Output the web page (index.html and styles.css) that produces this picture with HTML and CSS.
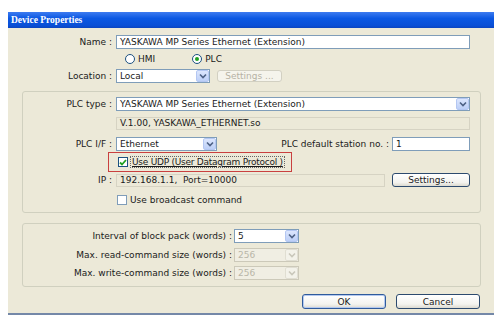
FILE: index.html
```html
<!DOCTYPE html>
<html lang="en">
<head>
    <meta charset="UTF-8">
    <title>Device Properties</title>
    <link rel="stylesheet" href="styles.css">
</head>
<body>
    <div class="dialog">
        <div class="titlebar">Device Properties</div>
        <div class="content">
            <div class="row">
                <span class="label top-label">Name :</span>
                <div class="field w-full">YASKAWA MP Series Ethernet (Extension)</div>
            </div>
            <div class="row radios">
                <span class="radio"></span><span class="radio-text">HMI</span>
                <span class="radio checked"></span><span class="radio-text">PLC</span>
            </div>
            <div class="row">
                <span class="label top-label">Location :</span>
                <div class="select w-loc">
                    <span class="value">Local</span>
                    <span class="arrow"><svg width="8" height="6" viewBox="0 0 8 6"><polyline points="1,1.5 4,4.5 7,1.5" fill="none" stroke="#4d6185" stroke-width="1.6"/></svg></span>
                </div>
                <button class="btn disabled btn-loc">Settings ...</button>
            </div>

            <div class="group group-plc">
                <div class="row first">
                    <span class="label grp-label">PLC type :</span>
                    <div class="select w-full">
                        <span class="value">YASKAWA MP Series Ethernet (Extension)</span>
                        <span class="arrow"><svg width="8" height="6" viewBox="0 0 8 6"><polyline points="1,1.5 4,4.5 7,1.5" fill="none" stroke="#4d6185" stroke-width="1.6"/></svg></span>
                    </div>
                </div>
                <div class="row info-row">
                    <span class="label grp-label"></span>
                    <div class="field readonly w-full">V.1.00, YASKAWA_ETHERNET.so</div>
                </div>
                <div class="row if-row">
                    <span class="label grp-label">PLC I/F :</span>
                    <div class="select w-if">
                        <span class="value">Ethernet</span>
                        <span class="arrow"><svg width="8" height="6" viewBox="0 0 8 6"><polyline points="1,1.5 4,4.5 7,1.5" fill="none" stroke="#4d6185" stroke-width="1.6"/></svg></span>
                    </div>
                    <span class="station-label">PLC default station no. :</span>
                    <div class="field w-small">1</div>
                </div>
                <div class="udp-box">
                    <span class="check checked"><svg width="8" height="7" viewBox="0 0 8 7"><polyline points="1,3.5 3,5.5 7,1" fill="none" stroke="#21a121" stroke-width="1.8"/></svg></span>
                    <span class="udp-text">Use UDP (User Datagram Protocol )</span>
                </div>
                <div class="row ip-row">
                    <span class="label grp-label">IP :</span>
                    <div class="field readonly w-ip">192.168.1.1,&nbsp; Port=10000</div>
                    <button class="btn btn-ip">Settings...</button>
                </div>
                <div class="row bc-row">
                    <span class="label grp-label"></span>
                    <span class="check"></span>
                    <span class="check-text">Use broadcast command</span>
                </div>
            </div>

            <div class="group group-block">
                <div class="row first">
                    <span class="label blk-label">Interval of block pack (words) :</span>
                    <div class="select w-num">
                        <span class="value">5</span>
                        <span class="arrow"><svg width="8" height="6" viewBox="0 0 8 6"><polyline points="1,1.5 4,4.5 7,1.5" fill="none" stroke="#4d6185" stroke-width="1.6"/></svg></span>
                    </div>
                </div>
                <div class="row read-row">
                    <span class="label blk-label">Max. read-command size (words) :</span>
                    <div class="select disabled w-num">
                        <span class="value">256</span>
                        <span class="arrow"><svg width="8" height="6" viewBox="0 0 8 6"><polyline points="1,1.5 4,4.5 7,1.5" fill="none" stroke="#c9c7ba" stroke-width="1.6"/></svg></span>
                    </div>
                </div>
                <div class="row write-row">
                    <span class="label blk-label">Max. write-command size (words) :</span>
                    <div class="select disabled w-num">
                        <span class="value">256</span>
                        <span class="arrow"><svg width="8" height="6" viewBox="0 0 8 6"><polyline points="1,1.5 4,4.5 7,1.5" fill="none" stroke="#c9c7ba" stroke-width="1.6"/></svg></span>
                    </div>
                </div>
            </div>

            <div class="buttons">
                <button class="btn btn-main default">OK</button>
                <button class="btn btn-main">Cancel</button>
            </div>
        </div>
    </div>
</body>
</html>
```

FILE: styles.css
```css
body {
    margin: 0;
    background: #fff;
    font-family: "DejaVu Sans", Verdana, sans-serif;
    font-size: 9px;
    color: #1a1a1a;
}

.dialog {
    width: 486px;
    margin: 12px 0 0 8px;
    background: #ece9d8;
    border-bottom: 2px solid #7488a8;
}

.titlebar {
    height: 16px;
    line-height: 16px;
    padding-left: 3px;
    background: linear-gradient(#3d7bf0, #0b58e3 40%, #0a4fd6 85%, #0c45c0);
    color: #fff;
    font-family: "Liberation Serif", serif;
    font-weight: bold;
    font-size: 9.5px;
}

.content {
    padding: 7px 0 4px 0;
}

.row {
    display: flex;
    align-items: center;
    height: 14px;
    margin-top: 3px;
}

.content > .row:first-child {
    margin-top: 0;
}

.label {
    text-align: right;
    padding-right: 4px;
    flex-shrink: 0;
    white-space: nowrap;
}

.top-label {
    width: 104px;
}

.grp-label {
    width: 89px;
}

.blk-label {
    width: 209px;
    padding-right: 2px;
}

.field,
.select {
    box-sizing: border-box;
    height: 14px;
    border: 1px solid #7f9db9;
    background: #fff;
    display: flex;
    align-items: center;
    padding-left: 3px;
    white-space: nowrap;
    overflow: hidden;
}

.field.readonly {
    background: #ece9d8;
    border-color: #d6d3c3;
    height: 13px;
}

.select {
    padding-right: 0;
}

.select .value {
    flex: 1;
}

.select .arrow {
    box-sizing: border-box;
    width: 13px;
    height: 12px;
    background: linear-gradient(#dce6fd, #bccff7);
    border: 1px solid #b4c7f2;
    border-radius: 2px;
    display: flex;
    align-items: center;
    justify-content: center;
}

.select.disabled {
    border-color: #ccc9b9;
    background: #f0eee3;
    color: #b9b6a8;
}

.select.disabled .arrow {
    background: #f3f2ea;
    border-color: #e0ded2;
}

.w-full { width: 354px; }
.w-loc { width: 94px; }
.w-if { width: 101px; }
.w-small { width: 78px; }
.w-ip { width: 269px; }
.w-num { width: 65px; }

.radios {
    margin-top: 3px;
}

.radio {
    box-sizing: border-box;
    width: 10px;
    height: 10px;
    border: 1px solid #1c5180;
    border-radius: 50%;
    background: #fff;
    position: relative;
    margin-left: 117px;
}

.radio.checked {
    margin-left: 37px;
}

.radio.checked::after {
    content: "";
    position: absolute;
    left: 2px;
    top: 2px;
    width: 4px;
    height: 4px;
    border-radius: 50%;
    background: #21a121;
}

.radio-text {
    margin-left: 3px;
}

.btn {
    box-sizing: border-box;
    font-family: "DejaVu Sans", Verdana, sans-serif;
    font-size: 9px;
    color: #1a1a1a;
    background: linear-gradient(#ffffff, #f3f3ef 70%, #dcdad0);
    border: 1px solid #2c4a6e;
    border-radius: 3px;
    padding: 0;
    height: 14px;
}

.btn.disabled {
    color: #b5b2a4;
    border-color: #d2d0c2;
    background: #f5f4ec;
}

.btn-loc {
    width: 65px;
    height: 12px;
    margin-left: 7px;
}

.group {
    margin: 8px 13px 0 14px;
    border: 1px solid #d0d0bf;
    border-radius: 3px;
}

.group .row.first {
    margin-top: 5px;
}

.group-plc {
    padding-bottom: 5px;
}

.info-row {
    margin-top: 5px;
}

.if-row {
    margin-top: 7px;
}

.station-label {
    margin-left: auto;
    padding-right: 3px;
}

.if-row .w-small {
    margin-right: 10px;
}

.udp-box {
    box-sizing: border-box;
    width: 184px;
    height: 20px;
    margin: 1px 0 0 85px;
    border: 1px solid #c9403f;
    display: flex;
    align-items: center;
    padding-left: 9px;
    white-space: nowrap;
}

.check {
    box-sizing: border-box;
    width: 10px;
    height: 10px;
    border: 1px solid #1c5180;
    background: #fff;
    display: flex;
    align-items: center;
    justify-content: center;
    flex-shrink: 0;
}

.udp-text {
    margin-left: 2px;
    padding: 0 1px;
    border: 1px dotted #666;
    text-decoration: underline;
    letter-spacing: -0.25px;
    white-space: nowrap;
}

.ip-row {
    margin-top: 1px;
}

.btn-ip {
    width: 78px;
    margin-left: 7px;
    height: 14px;
}

.bc-row {
    margin-top: 6px;
}

.bc-row .check {
    margin-left: 1px;
    border-color: #7f9db9;
}

.check-text {
    margin-left: 3px;
}

.group-block {
    margin-top: 10px;
    padding-bottom: 6px;
}

.read-row {
    margin-top: 5px;
}

.write-row {
    margin-top: 4px;
}

.buttons {
    display: flex;
    justify-content: flex-end;
    gap: 10px;
    margin-top: 7px;
    padding-right: 14px;
}

.btn-main {
    width: 84px;
    height: 15px;
}

.btn-main.default {
    border-color: #2f5b9c;
    box-shadow: inset 0 0 0 1px #b4c9ef;
}
```
